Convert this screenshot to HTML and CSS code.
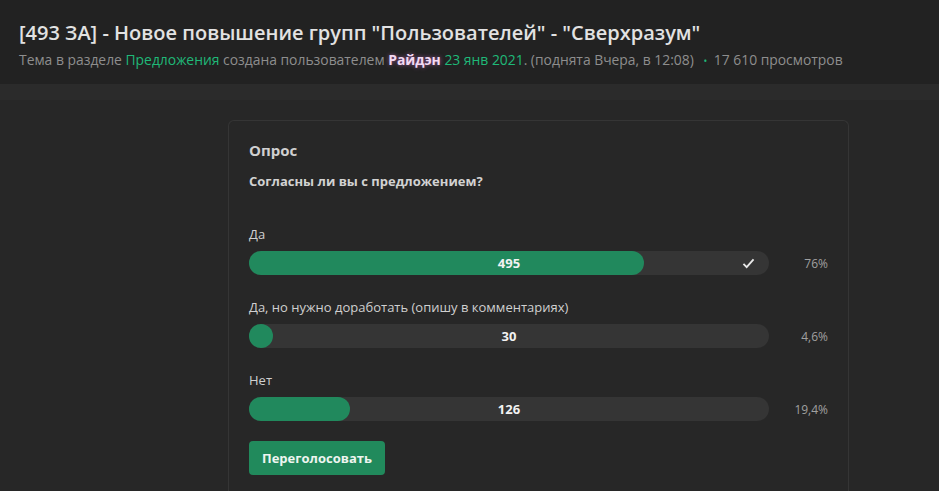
FILE: index.html
```html
<!DOCTYPE html>
<html lang="ru">
<head>
<meta charset="utf-8">
<link rel="stylesheet" href="styles.css">
</head>
<body>
<header class="thread-head">
  <h1 class="thread-title">[493 ЗА] - Новое повышение групп "Пользователей" - "Сверхразум"</h1>
  <div class="thread-meta">Тема в разделе <a class="link">Предложения</a> создана пользователем <span class="user">Райдэн</span> <a class="link">23 янв 2021</a>. (поднята Вчера, в 12:08) <span class="dot">•</span> 17 610 просмотров</div>
</header>
<div class="band"></div>
<main class="main">
  <section class="poll">
    <h2 class="poll-title">Опрос</h2>
    <div class="poll-question">Согласны ли вы с предложением?</div>
    <div class="options">
      <div class="option">
        <div class="opt-label">Да</div>
        <div class="opt-row">
          <div class="bar">
            <div class="fill" style="width:76%"></div>
            <span class="count">495</span>
            <svg class="check" viewBox="0 0 14 12" width="13" height="11"><path d="M1.5 6.5 L5 10 L12.5 1.5" fill="none" stroke="#e8e8e8" stroke-width="2"/></svg>
          </div>
          <div class="pct">76%</div>
        </div>
      </div>
      <div class="option">
        <div class="opt-label">Да, но нужно доработать (опишу в комментариях)</div>
        <div class="opt-row">
          <div class="bar">
            <div class="fill" style="width:4.6%"></div>
            <span class="count">30</span>
          </div>
          <div class="pct">4,6%</div>
        </div>
      </div>
      <div class="option">
        <div class="opt-label">Нет</div>
        <div class="opt-row">
          <div class="bar">
            <div class="fill" style="width:19.4%"></div>
            <span class="count">126</span>
          </div>
          <div class="pct">19,4%</div>
        </div>
      </div>
    </div>
    <button class="btn">Переголосовать</button>
  </section>
</main>
</body>
</html>
```
FILE: styles.css
```css
* { box-sizing: border-box; }
html, body { margin: 0; padding: 0; }
body {
  background: #272727;
  font-family: "Open Sans", "Noto Sans", sans-serif;
  color: #d6d6d6;
  height: 491px;
  overflow: hidden;
}
.thread-head {
  background: #222222;
  height: 84px;
  padding: 19px 19px 0;
}
.thread-title {
  margin: 0;
  font-size: 20px;
  font-weight: 600;
  line-height: 28px;
  color: #e2e2e2;
}
.thread-meta {
  margin-top: 3px;
  font-size: 13.88px;
  line-height: 20px;
  color: #8e8e8e;
}
.link { color: #1fb978; text-decoration: none; }
.user {
  font-weight: 700;
  color: #f2d9f2;
  text-shadow: 0 0 4px rgba(220, 120, 220, 0.6);
}
.dot { color: #1fb978; font-size: 10px; margin: 0 3px 0 6px; }
.band {
  height: 16px;
  background: #2b2b2b;
}
.main {
  padding: 20px 0 0 228px;
}
.poll {
  width: 621px;
  border: 1px solid #353535;
  border-bottom: none;
  border-radius: 6px 6px 0 0;
  padding: 18px 20px 14px;
  min-height: 380px;
}
.poll-title {
  margin: 0;
  font-size: 15px;
  font-weight: 700;
  line-height: 22px;
  color: #d0d0d0;
}
.poll-question {
  margin-top: 10px;
  font-size: 13px;
  font-weight: 700;
  line-height: 20px;
  color: #d2d2d2;
}
.options {
  margin-top: 34px;
  display: flex;
  flex-direction: column;
  gap: 23px;
}
.opt-label {
  font-size: 13px;
  line-height: 18px;
  color: #d0d0d0;
}
.opt-row {
  margin-top: 8px;
  display: flex;
  align-items: center;
}
.bar {
  position: relative;
  width: 520px;
  height: 24px;
  background: #353535;
  border-radius: 12px;
  display: flex;
  align-items: center;
  justify-content: center;
}
.fill {
  position: absolute;
  left: 0; top: 0; bottom: 0;
  min-width: 24px;
  background: #21895d;
  border-radius: 12px;
}
.count {
  position: relative;
  font-size: 13px;
  font-weight: 700;
  color: #f2f2f2;
}
.check {
  position: absolute;
  right: 14px;
  top: 7px;
}
.pct {
  flex: 1;
  text-align: right;
  font-size: 12px;
  color: #a0a0a0;
}
.btn {
  margin-top: 20px;
  height: 34px;
  padding: 0 13px;
  background: #218a5c;
  border: none;
  border-radius: 4px;
  color: #eef5f0;
  font-family: "Open Sans", "Noto Sans", sans-serif;
  font-size: 13px;
  font-weight: 700;
}
```
